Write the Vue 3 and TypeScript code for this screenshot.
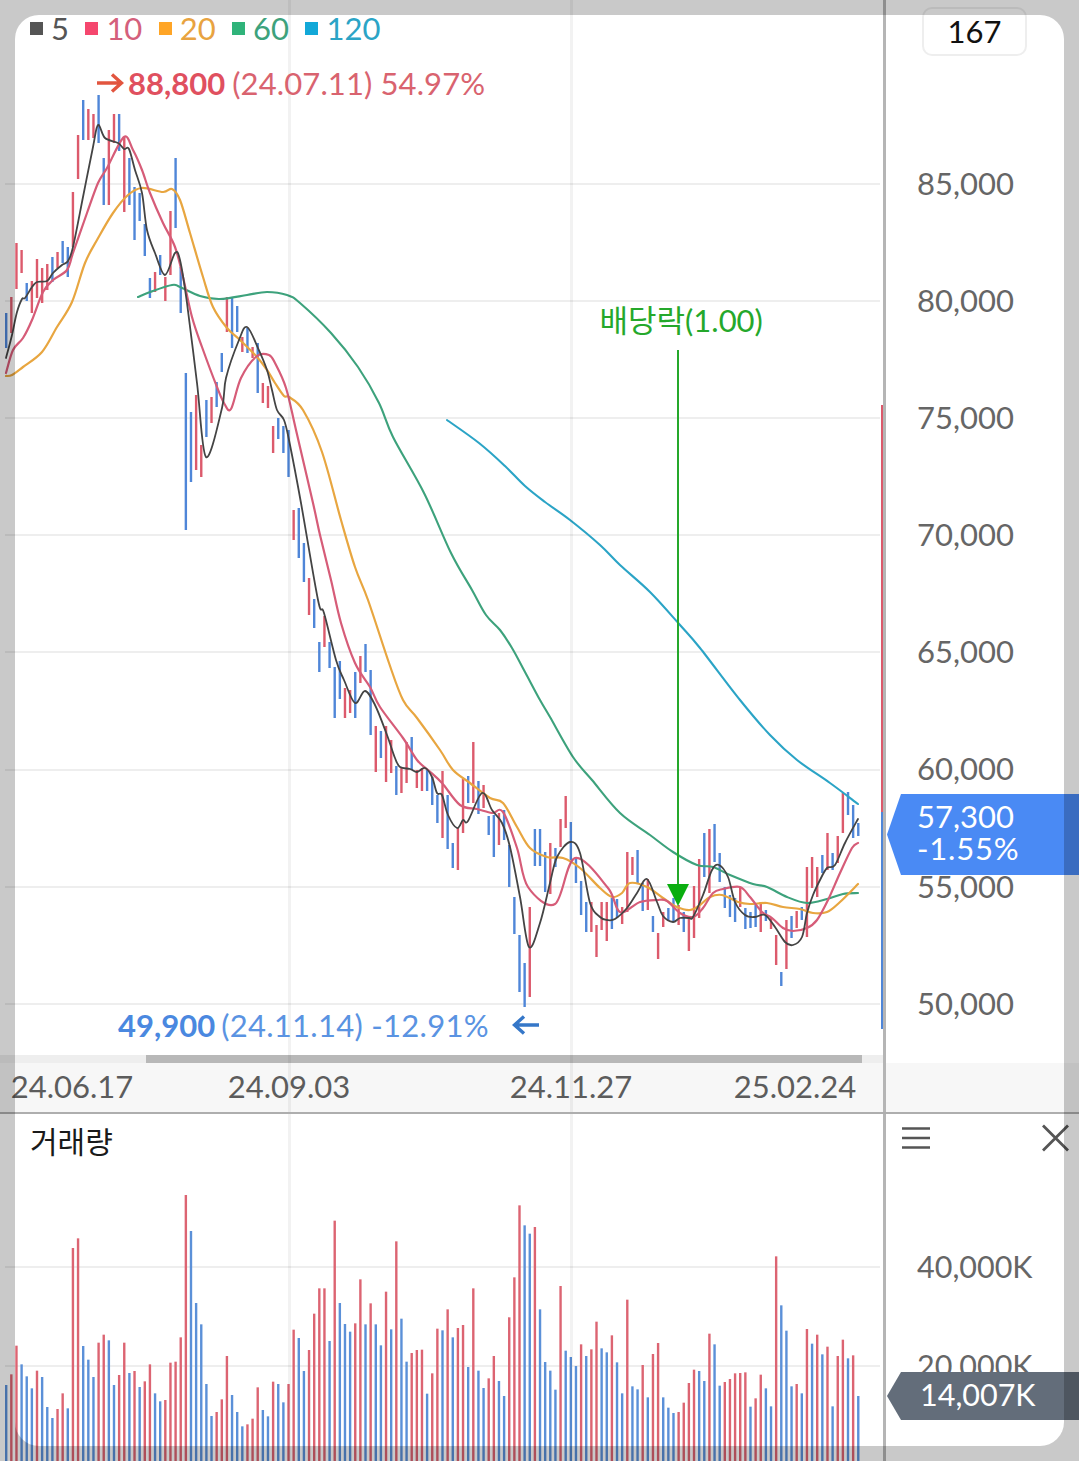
<script setup lang="ts">
import { computed } from 'vue';

type Tone = 'r' | 'b';

const colors: Record<Tone, string> = { r: '#dc5a6c', b: '#4f86d8' };
const volumeColors: Record<Tone, string> = { r: '#dc6472', b: '#5b90d8' };

// posicion horizontal de cada vela, son 167 en total
const barX = (i: number) => 6.2 + 5.133 * i;

// velas: "arriba-abajo" + color, en pixeles de la pantalla
const candleData =
  '313-348b 297-333r 243-289r 250-273r 283-301b 281-313r 259-298r 268-303r 264-290r 257-282b 252-268r 241-263b ' +
  '247-277b 192-247r 135-179r 100-140b 109-140r 114-138r 95-143b 158-205b 130-205r 114-143r 114-151b 137-212r ' +
  '158-205b 187-240b 193-221b 224-256b 278-298b 272-292r 255-275b 277-301r 211-275r 158-228b 267-313b 373-530b ' +
  '412-482b 395-470r 445-477r 400-437b 397-423r 382-407b 353-372b 297-332r 297-348b 306-332b 337-352r 328-353b ' +
  '347-358r 343-393b 383-403r 386-408r 426-453r 418-439b 426-453b 430-477b 510-540r 508-558b 543-582b 578-615r ' +
  '599-628b 642-672b 616-647r 642-668b 667-718b 661-699b 688-718r 690-713r 672-718b 656-683r 644-672b 670-735b ' +
  '726-772r 731-758b 726-782r 740-773r 766-795b 767-793r 742-783r 737-770b 770-788r 768-791r 770-791b 777-805b ' +
  '795-823b 771-838r 795-849b 843-868b 828-870r 779-833r 776-803b 742-803r 781-814b 785-808r 816-835b 815-857b ' +
  '813-845r 810-840b 845-887b 897-934b 935-992b 963-1007b 907-997r 829-866b 829-866b 852-892b 843-894r 848-867b ' +
  '819-847r 796-828r 822-860b 857-883b 881-915b 902-932b 902-932r 925-957r 902-930r 902-941r 898-929b 899-918b ' +
  '907-924r 852-912r 857-875r 850-883b 883-911b 879-910r 916-932b 933-959r 912-927r 908-920b 898-922b 905-925r ' +
  '912-932b 918-951r 886-938r 859-918r 833-877b 829-893r 824-862b 853-882b 887-908b 895-917b 898-922b 887-907r ' +
  '908-929b 912-928b 904-927b 902-932r 910-921b 918-929r 935-965r 972-986b 920-969r 916-938b 911-928r 907-920b ' +
  '867-937r 857-888r 867-897r 855-873b 833-870r 853-870b 836-863r 793-833r 792-815b 805-838b 823-836b';

// volumen: tope de cada barra en tercios de pixel desde y=1100
const volumeData =
  '855b 823r 737r 793b 829b 865b 812r 831b 921b 954b 927r 880r 925b 444r 415r 738b 779b 831b 728r 704r 721b 855b ' +
  '825r 728r 819b 813r 861b 844r 793r 880b 904b 900r 788r 785r 712r 285r 393b 609b 673b 852b 948b 936r 898r 768r ' +
  '885b 936b 979b 973r 956r 862r 930b 949b 845r 852b 907b 852r 689r 714b 813b 750r 641r 565r 565r 723b 362r 609b ' +
  '672b 695b 670r 538r 673b 610r 673b 736b 575r 688b 424r 656b 785b 759r 750r 749r 881b 820r 686r 691b 628r 712b ' +
  '684r 675r 801b 565r 812b 864b 835r 768r 843b 888b 652r 532r 316r 376b 401b 381r 628b 786b 812b 869b 558r 752b ' +
  '771b 798b 733r 768b 748r 665r 745b 757b 706r 787b 880b 599r 859b 868b 795r 892b 762r 729r 892b 923b 939b 936r ' +
  '908r 849r 809r 813b 843b 701r 733b 857b 846r 837r 820r 819r 817r 920b 895r 824r 865b 919b 469r 616b 692b 859b ' +
  '852r 880b 687r 731b 704r 763b 740r 919b 768r 719r 775b 766r 888b';

const candles = computed(() =>
  candleData.split(' ').map((item, i) => {
    const [top, bottom] = item.slice(0, -1).split('-').map(Number);
    return { x: barX(i), top, bottom, color: colors[item.slice(-1) as Tone] };
  }),
);

const volumes = computed(() =>
  volumeData.split(' ').map((item, i) => ({
    x: barX(i),
    top: 1100 + parseInt(item) / 3,
    color: volumeColors[item.slice(-1) as Tone],
  })),
);

// suaviza la linea de puntos con curvas para que no se vea quebrada
const smooth = (points: string) => {
  const p = points.split(' ').map((pair) => pair.split(',').map(Number));
  let d = `M${p[0][0]} ${p[0][1]}`;
  for (let i = 0; i < p.length - 1; i++) {
    const a = p[Math.max(i - 1, 0)];
    const b = p[i];
    const c = p[i + 1];
    const e = p[Math.min(i + 2, p.length - 1)];
    const c1x = b[0] + (c[0] - a[0]) / 6;
    const c1y = b[1] + (c[1] - a[1]) / 6;
    const c2x = c[0] - (e[0] - b[0]) / 6;
    const c2y = c[1] - (e[1] - b[1]) / 6;
    d += `C${c1x.toFixed(1)} ${c1y.toFixed(1)} ${c2x.toFixed(1)} ${c2y.toFixed(1)} ${c[0]} ${c[1]}`;
  }
  return d;
};

// medias moviles
const averages = [
  {
    name: 'ma120',
    color: '#2ba4c6',
    width: 2.1,
    points: '447,420 479,443 505,466 525,486 545,502 570,520 600,545 620,565 650,592 680,625 700,648 740,700 770,735 797,760 830,783 858,804',
  },
  {
    name: 'ma60',
    color: '#3da27c',
    width: 2.1,
    points:
      '138,297 150,292 172,285 180,287 200,296 220,299 247,295 267,292 287,295 300,303 331,333 358,367 379,403 393,437 424,493 451,553 472,590 486,615 500,630 512,648 525,672 540,700 550,717 573,757 592,780 620,813 650,835 673,852 697,865 713,867 730,875 753,884 767,887 787,897 807,903 827,899 843,894 858,893',
  },
  {
    name: 'ma20',
    color: '#e8a640',
    width: 2.2,
    points:
      '6,376 12,375 23,367 42,352 57,327 72,302 85,263 97,240 113,213 128,195 142,188 163,192 172,189 180,200 190,233 203,277 213,307 227,328 240,340 257,357 267,370 275,383 284,396 289,397 303,410 322,452 341,520 355,567 368,600 389,663 403,700 417,718 440,750 453,770 470,783 490,798 503,803 517,827 530,848 547,857 563,858 580,868 600,888 612,897 622,893 630,883 647,887 663,898 677,907 690,910 700,905 710,897 722,895 738,902 750,904 767,903 783,907 800,909 813,913 827,912 840,902 858,884',
  },
  {
    name: 'ma10',
    color: '#d65c78',
    width: 2.2,
    points:
      '6,373 13,350 23,338 32,320 43,292 53,280 67,270 73,253 87,213 98,183 107,168 124,137 133,150 142,170 150,193 163,223 175,247 183,277 192,317 202,347 217,387 224,403 231,409 241,378 257,356 269,355 275,363 286,388 296,430 313,503 320,535 331,580 341,623 355,663 370,687 380,707 403,738 417,760 428,770 442,783 460,805 477,809 492,813 503,812 517,848 528,887 555,904 575,858 608,888 620,912 640,902 657,900 667,901 680,913 693,917 703,908 713,893 723,889 740,887 750,897 762,912 772,918 783,928 793,931 807,928 817,920 828,900 840,873 852,848 858,843',
  },
  {
    name: 'ma5',
    color: '#444444',
    width: 1.8,
    points:
      '6,358 12,335 17,312 22,299 25,298 32,287 37,282 47,281 53,273 62,265 68,261 73,247 83,197 93,147 98,125 105,138 118,143 124,149 129,149 135,170 142,193 147,230 155,253 165,275 175,253 180,260 187,303 197,383 206,457 222,408 226,378 239,340 247,327 258,348 267,370 272,390 277,410 284,420 289,440 301,503 318,600 324,613 336,660 344,680 355,703 365,691 375,705 387,735 395,758 400,767 410,769 417,772 425,768 432,777 437,793 442,795 448,815 457,828 463,820 468,821 482,793 492,810 502,823 510,847 520,897 529,947 540,923 550,883 557,857 570,842 580,853 590,903 600,917 607,920 615,919 627,908 637,893 647,879 657,902 663,916 673,922 680,918 689,918 693,917 703,895 712,870 719,865 728,877 735,902 745,915 755,917 765,915 775,927 785,942 793,945 802,937 807,913 813,895 820,880 827,868 835,865 845,843 858,819',
  },
];

const legend = [
  { label: '5', square: '#555555', text: '#555555' },
  { label: '10', square: '#f5476e', text: '#d4607c' },
  { label: '20', square: '#ffa526', text: '#e8a340' },
  { label: '60', square: '#2fb37a', text: '#3da27c' },
  { label: '120', square: '#12a8d8', text: '#2ba4c6' },
];

const priceGrid = [184, 301, 418, 535, 652, 770, 887, 1004];
const priceTicks = ['85,000', '80,000', '75,000', '70,000', '65,000', '60,000', '55,000', '50,000'];
const dateGrid = [289, 571];
const dateTicks = [
  { label: '24.06.17', x: 72 },
  { label: '24.09.03', x: 289 },
  { label: '24.11.27', x: 571 },
  { label: '25.02.24', x: 795 },
];
const volumeGrid = [1267, 1366];
const volumeTicks = ['40,000K', '20,000K'];
</script>

<template>
  <div class="screen">
    <section class="price-panel">
      <div class="price-plot">
        <svg class="price-svg" width="883" height="1055" viewBox="0 0 883 1055">
          <line v-for="y in priceGrid" :key="y" x1="5" x2="880" :y1="y" :y2="y" class="grid-line" />
          <line
            v-for="c in candles"
            :key="c.x"
            :x1="c.x"
            :x2="c.x"
            :y1="c.top"
            :y2="c.bottom"
            :stroke="c.color"
            stroke-width="2.4"
          />
          <path
            v-for="ma in averages"
            :key="ma.name"
            :d="smooth(ma.points)"
            :stroke="ma.color"
            :stroke-width="ma.width"
            fill="none"
            stroke-linejoin="round"
            stroke-linecap="round"
          />
          <!-- flecha del ex-dividendo -->
          <line x1="678" x2="678" y1="350" y2="888" stroke="#25a82b" stroke-width="2" />
          <polygon points="667,884 689,884 678,906" fill="#0aae0f" />
        </svg>

        <div class="scroll-track"><div class="scroll-thumb"></div></div>
        <div class="date-axis">
          <span v-for="d in dateTicks" :key="d.label" class="date-tick" :style="{ left: d.x + 'px' }">{{ d.label }}</span>
        </div>

        <span v-for="x in dateGrid" :key="x" class="date-line" :style="{ left: x + 'px' }"></span>

        <ul class="legend">
          <li v-for="item in legend" :key="item.label" class="legend-item" :style="{ color: item.text }">
            <i class="legend-square" :style="{ background: item.square }"></i>{{ item.label }}
          </li>
        </ul>

        <div class="extreme high">
          <svg class="extreme-arrow" width="28" height="22" viewBox="0 0 28 22">
            <path d="M1 11H25M16 2.5L25.5 11L16 19.5" fill="none" stroke="#e2553f" stroke-width="3.4" />
          </svg>
          <b>88,800</b><span>(24.07.11) 54.97%</span>
        </div>
        <div class="extreme low">
          <b>49,900</b><span>(24.11.14) -12.91%</span>
          <svg class="extreme-arrow" width="28" height="22" viewBox="0 0 28 22">
            <path d="M27 11H3M12 2.5L2.5 11L12 19.5" fill="none" stroke="#3577c8" stroke-width="3.4" />
          </svg>
        </div>
        <span class="dividend">배당락(1.00)</span>

        <span class="range-bar up"></span>
        <span class="range-bar down"></span>
      </div>

      <aside class="price-scale">
        <div class="count-box">167</div>
        <ul class="scale-ticks">
          <li v-for="tick in priceTicks" :key="tick">{{ tick }}</li>
        </ul>
        <div class="scale-foot"></div>
        <div class="tag price-tag">
          <span>57,300</span>
          <span class="price-change">-1.55%</span>
        </div>
      </aside>
    </section>

    <section class="volume-panel">
      <div class="volume-plot">
        <svg class="volume-svg" width="883" height="347" viewBox="0 1114 883 347">
          <line v-for="y in volumeGrid" :key="y" x1="5" x2="880" :y1="y" :y2="y" class="grid-line" />
          <line
            v-for="v in volumes"
            :key="v.x"
            :x1="v.x"
            :x2="v.x"
            :y1="v.top"
            y2="1461"
            :stroke="v.color"
            stroke-width="2.4"
          />
        </svg>
        <span v-for="x in dateGrid" :key="x" class="date-line" :style="{ left: x + 'px' }"></span>
        <span class="volume-title">거래량</span>
      </div>

      <aside class="volume-scale">
        <div class="volume-tools">
          <svg width="30" height="24" viewBox="0 0 30 24">
            <path d="M1 2.5H29M1 12H29M1 21.5H29" stroke="#555" stroke-width="2.6" fill="none" />
          </svg>
          <svg width="29" height="28" viewBox="0 0 29 28">
            <path d="M2 1.5L27 26.5M27 1.5L2 26.5" stroke="#555" stroke-width="2.8" fill="none" />
          </svg>
        </div>
        <ul class="volume-ticks">
          <li v-for="tick in volumeTicks" :key="tick">{{ tick }}</li>
        </ul>
        <div class="tag volume-tag"><span>14,007K</span></div>
      </aside>
    </section>

    <!-- velo gris con esquinas redondeadas encima de toda la pantalla -->
    <div class="sheet-mask"></div>
  </div>
</template>

<style scoped>
.screen {
  position: relative;
  width: 1079px;
  height: 1461px;
  overflow: hidden;
  background: #fff;
  font-family: Lato, 'Noto Sans CJK KR', sans-serif;
  font-size: 31px;
  color: #666;
}

ul {
  list-style: none;
  margin: 0;
  padding: 0;
}

.price-panel {
  display: grid;
  grid-template-columns: 883px 1fr;
  height: 1114px;
  border-bottom: 2px solid #aeaeae;
  box-sizing: border-box;
}

.price-plot,
.volume-plot {
  position: relative;
}

.price-svg,
.volume-svg {
  display: block;
}

.grid-line {
  stroke: #eeeeee;
  stroke-width: 2;
}

.scroll-track {
  height: 8px;
  background: #eeeeee;
  padding-left: 146px;
  padding-right: 21px;
}

.scroll-thumb {
  height: 100%;
  background: #b8b8b8;
}

.date-axis {
  position: relative;
  height: 49px;
  background: #f7f7f7;
  color: #5c5c5c;
}

.date-tick {
  position: absolute;
  top: 3px;
  transform: translateX(-50%);
  white-space: nowrap;
  line-height: 40px;
}

.date-line {
  position: absolute;
  top: 0;
  bottom: 0;
  width: 3px;
  margin-left: -1.5px;
  background: rgba(0, 0, 0, 0.05);
}

.legend {
  position: absolute;
  top: 8px;
  left: 30px;
  display: flex;
  gap: 16.4px;
  line-height: 40px;
}

.legend-item {
  display: flex;
  align-items: center;
  gap: 8px;
}

.legend-square {
  width: 13px;
  height: 13px;
}

.extreme {
  position: absolute;
  display: flex;
  align-items: center;
  line-height: 40px;
  white-space: nowrap;
}

.extreme.high {
  top: 62.5px;
  left: 96px;
  color: #d9636f;
}

.extreme.high b {
  color: #e0505f;
  margin-left: 4px;
}

.extreme.high span {
  margin-left: 7px;
  letter-spacing: 0.12px;
}

.extreme.low {
  top: 1005px;
  left: 118px;
  color: #5a93e2;
}

.extreme.low b {
  color: #4a88e0;
}

.extreme.low span {
  margin-left: 6px;
  letter-spacing: 0.28px;
}

.extreme.low .extreme-arrow {
  margin-left: 23px;
}

.dividend {
  position: absolute;
  top: 300px;
  left: 599.5px;
  line-height: 40px;
  color: #25a82b;
  white-space: nowrap;
}

.range-bar {
  position: absolute;
  left: 881px;
  width: 3px;
}

.range-bar.up {
  top: 405px;
  height: 407px;
  background: #dc5a6c;
}

.range-bar.down {
  top: 812px;
  height: 217px;
  background: #4f86d8;
}

.price-scale {
  position: relative;
  display: flex;
  flex-direction: column;
  border-left: 3px solid #b5b5b5;
}

.count-box {
  box-sizing: border-box;
  width: 105px;
  height: 49px;
  margin: 7px 0 0 36px;
  border: 2px solid #eeeeee;
  border-radius: 10px;
  text-align: center;
  line-height: 44px;
  color: #111;
}

.scale-ticks {
  margin-top: 69px;
  padding-left: 31px;
}

.scale-ticks li {
  height: 117.1px;
  line-height: 117.1px;
}

.scale-foot {
  margin-top: auto;
  height: 49px;
  background: #f7f7f7;
}

.tag {
  position: absolute;
  left: 1px;
  right: 0;
  color: #fff;
  clip-path: polygon(0 50%, 14px 0, 100% 0, 100% 100%, 14px 100%);
}

.price-tag {
  top: 794px;
  height: 81px;
  padding: 6px 0 0 30px;
  box-sizing: border-box;
  background: #4a8af4;
  display: flex;
  flex-direction: column;
  line-height: 32px;
}

.price-change {
  letter-spacing: 0.8px;
}

.volume-panel {
  display: grid;
  grid-template-columns: 883px 1fr;
  height: 347px;
}

.volume-title {
  position: absolute;
  top: 7px;
  left: 30px;
  font-size: 30px;
  line-height: 40px;
  color: #1a1a1a;
}

.volume-scale {
  position: relative;
  border-left: 3px solid #b5b5b5;
  font-size: 30.5px;
}

.volume-tools {
  display: flex;
  justify-content: space-between;
  align-items: center;
  padding: 10px 9px 0 15px;
}

.volume-ticks {
  margin-top: 65px;
  padding-left: 31px;
}

.volume-ticks li {
  height: 99px;
  line-height: 99px;
}

.volume-tag {
  top: 258px;
  height: 48px;
  padding-left: 33px;
  background: #636d7a;
  line-height: 45px;
}

.sheet-mask {
  position: absolute;
  top: 15px;
  left: 15px;
  right: 15px;
  bottom: 15px;
  border-radius: 24px;
  box-shadow: 0 0 0 60px rgba(0, 0, 0, 0.21);
  pointer-events: none;
}
</style>
